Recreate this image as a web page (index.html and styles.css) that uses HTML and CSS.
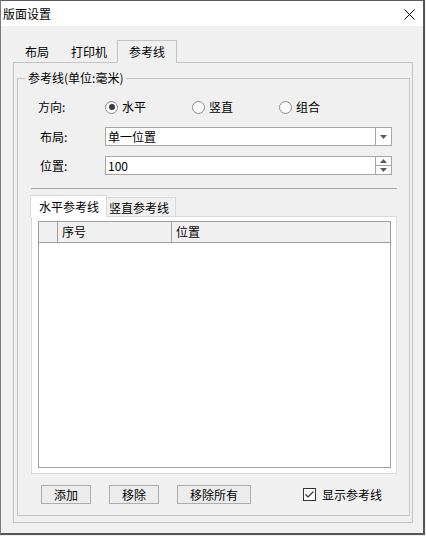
FILE: index.html
```html
<!DOCTYPE html>
<html lang="zh-CN">
<head>
<meta charset="utf-8">
<title>版面设置</title>
<link rel="stylesheet" href="styles.css">
</head>
<body>
<div class="win">
  <div class="titlebar">
    <span class="title">版面设置</span>
    <svg class="close" width="11" height="11" viewBox="0 0 11 11"><path d="M0.5 0.5 L10.5 10.5 M10.5 0.5 L0.5 10.5" stroke="#000" stroke-width="1" fill="none"/></svg>
  </div>
  <div class="win-body">
    <div class="tabs">
      <div class="tab tab-a">布局</div>
      <div class="tab tab-b">打印机</div>
      <div class="tab tab-sel">参考线</div>
    </div>
    <div class="panel">
      <fieldset class="group">
        <legend class="legend">参考线(单位:毫米)</legend>
        <div class="row row-dir">
          <div class="label">方向:</div>
          <div class="radio-item"><span class="radio checked"></span><span>水平</span></div>
          <div class="radio-item"><span class="radio"></span><span>竖直</span></div>
          <div class="radio-item"><span class="radio"></span><span>组合</span></div>
        </div>
        <div class="row row-ctl">
          <div class="label label-b">布局:</div>
          <div class="field">
            <div class="field-text">单一位置</div>
            <div class="drop-btn"><svg width="7" height="4" viewBox="0 0 7 4"><polygon points="0,0 7,0 3.5,4" fill="#5a5a5a"/></svg></div>
          </div>
        </div>
        <div class="row row-ctl row-spin">
          <div class="label label-b">位置:</div>
          <div class="field">
            <div class="field-text">100</div>
            <div class="spin-btns">
              <div class="spin-up"><svg width="7" height="4" viewBox="0 0 7 4"><polygon points="0,4 7,4 3.5,0" fill="#5a5a5a"/></svg></div>
              <div class="spin-down"><svg width="7" height="4" viewBox="0 0 7 4"><polygon points="0,0 7,0 3.5,4" fill="#5a5a5a"/></svg></div>
            </div>
          </div>
        </div>
        <div class="sep"></div>
        <div class="subtabs-block">
          <div class="subtabs">
            <div class="subtab subtab-sel">水平参考线</div>
            <div class="subtab subtab-off">竖直参考线</div>
          </div>
          <div class="subpanel">
            <div class="grid">
              <div class="grid-head">
                <div class="gh gh-row"></div>
                <div class="gh gh-num">序号</div>
                <div class="gh gh-pos">位置</div>
              </div>
              <div class="grid-body"></div>
            </div>
          </div>
        </div>
        <div class="actions">
          <div class="btn btn-add">添加</div>
          <div class="btn btn-del">移除</div>
          <div class="btn btn-all">移除所有</div>
          <div class="check">
            <span class="checkbox"><svg width="11" height="11" viewBox="0 0 11 11"><path d="M1.5 5.5 L4 8 L9.5 2.5" stroke="#333" stroke-width="1.2" fill="none"/></svg></span>
            <span>显示参考线</span>
          </div>
        </div>
      </fieldset>
    </div>
  </div>
</div>
</body>
</html>
```
FILE: styles.css
```css
* { box-sizing: border-box; }
html, body { margin: 0; padding: 0; }
body {
  background: #f0f0f0;
  font-family: "Noto Sans CJK SC", "Microsoft YaHei", sans-serif;
  font-size: 12px;
  color: #000;
}
.win {
  width: 425px;
  height: 535px;
  border: 1px solid #7a7a7a;
  border-top-color: #5c5c5c;
  border-right: 2px solid #555;
  border-bottom: 2px solid #555;
  background: #f0f0f0;
  display: flex;
  flex-direction: column;
}
.titlebar {
  height: 25px;
  background: #fff;
  display: flex;
  align-items: center;
  padding-left: 2px;
  line-height: 14px;
}
.close { margin-left: auto; margin-right: 8px; margin-top: 2px; }
.win-body {
  flex: 1;
  display: flex;
  flex-direction: column;
  padding: 14px 10px 10px 12px;
}
.tabs {
  height: 22px;
  display: flex;
  align-items: flex-end;
}
.tab {
  height: 20px;
  display: flex;
  align-items: center;
  justify-content: center;
  line-height: 14px;
}
.tab-a { width: 48px; }
.tab-b { width: 56px; }
.tab-sel {
  width: 60px;
  height: 23px;
  margin-bottom: -1px;
  border: 1px solid #c4c4c4;
  border-bottom: none;
  background: #f0f0f0;
  position: relative;
  z-index: 1;
}
.panel {
  flex: 1;
  display: flex;
  flex-direction: column;
  border: 1px solid #c4c4c4;
  padding: 8px 2px 6px 3px;
}
.group {
  flex: 1;
  margin: 0;
  min-width: 0;
  padding: 0 0 11px 0;
  border: 1px solid #c4c4c4;
  display: flex;
  flex-direction: column;
}
.legend {
  margin-left: 7px;
  padding: 0 3px;
  line-height: 14px;
}
.row {
  display: flex;
  align-items: center;
}
.row-dir { margin-top: 12px; height: 20px; }
.label {
  width: 87px;
  padding-left: 20px;
  line-height: 14px;
}
.label-b { padding-left: 22px; }
.radio-item {
  width: 87px;
  display: flex;
  align-items: center;
  gap: 4px;
  line-height: 14px;
}
.radio {
  width: 13px;
  height: 13px;
  border-radius: 50%;
  border: 1px solid #8e8e8e;
  background: #fafafa;
  display: flex;
  align-items: center;
  justify-content: center;
}
.radio.checked::after {
  content: "";
  width: 6px;
  height: 6px;
  border-radius: 50%;
  background: #3c3c3c;
}
.row-ctl { margin-top: 10px; height: 19px; }
.field {
  width: 287px;
  height: 19px;
  border: 1px solid #a6a6a6;
  background: #fff;
  display: flex;
}
.field-text {
  flex: 1;
  padding-left: 2px;
  line-height: 17px;
}
.drop-btn {
  width: 16px;
  border-left: 1px solid #a6a6a6;
  display: flex;
  align-items: center;
  justify-content: center;
}
.spin-btns {
  width: 16px;
  border-left: 1px solid #a6a6a6;
  display: flex;
  flex-direction: column;
}
.spin-up {
  height: 8px;
  display: flex;
  align-items: center;
  justify-content: center;
}
.spin-down {
  flex: 1;
  border-top: 1px solid #a6a6a6;
  display: flex;
  align-items: center;
  justify-content: center;
}
.sep {
  margin: 13px 12px 0 13px;
  height: 1px;
  background: #a8a8a8;
}
.subtabs-block {
  flex: 1;
  display: flex;
  flex-direction: column;
  margin: 6px 12px 0 12px;
}
.subtabs {
  height: 21px;
  display: flex;
  align-items: flex-end;
}
.subtab { line-height: 14px; }
.subtab-sel {
  width: 77px;
  height: 22px;
  margin-bottom: -1px;
  border: 1px solid #d9d9d9;
  border-bottom: none;
  background: #fff;
  padding: 4px 0 0 8px;
  position: relative;
  z-index: 1;
}
.subtab-off {
  width: 70px;
  height: 19px;
  margin-left: -1px;
  border: 1px solid #d9d9d9;
  border-bottom: none;
  background: #f0f0f0;
  padding: 3px 0 0 2px;
}
.subpanel {
  flex: 1;
  display: flex;
  flex-direction: column;
  margin-left: 1px;
  border: 1px solid #d9d9d9;
  background: #fff;
  padding: 4px 5px 5px 6px;
}
.grid {
  flex: 1;
  display: flex;
  flex-direction: column;
  border: 1px solid #a0a0a0;
}
.grid-head {
  height: 21px;
  display: grid;
  grid-template-columns: 19px 114px 1fr;
  background: #f0f0f0;
  border-bottom: 1px solid #a0a0a0;
}
.gh {
  line-height: 20px;
  padding-left: 4px;
}
.gh-row, .gh-num { border-right: 1px solid #a0a0a0; }
.grid-body { flex: 1; background: #fff; }
.actions {
  margin-top: 11px;
  height: 19px;
  display: flex;
  align-items: center;
  padding-left: 23px;
}
.btn {
  height: 19px;
  border: 1px solid #adadad;
  background: #ececec;
  display: flex;
  align-items: center;
  justify-content: center;
  line-height: 14px;
}
.btn-add { width: 50px; }
.btn-del { width: 50px; margin-left: 18px; }
.btn-all { width: 74px; margin-left: 18px; }
.check {
  margin-left: 52px;
  display: flex;
  align-items: center;
  gap: 6px;
  line-height: 14px;
}
.checkbox {
  width: 13px;
  height: 13px;
  border: 1px solid #333;
  background: #fff;
  display: flex;
}
```
